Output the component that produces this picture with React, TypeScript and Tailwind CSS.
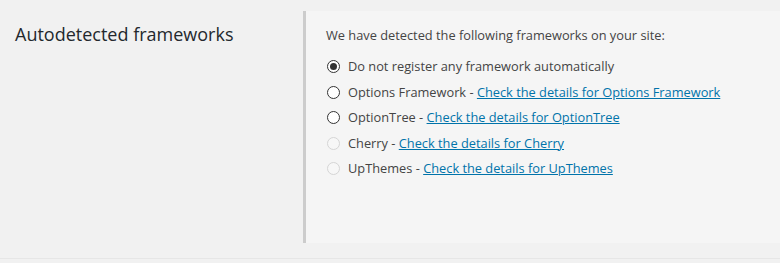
import React from 'react';

type Item = { name: string; link?: string; checked?: boolean; disabled?: boolean };

const items: Item[] = [
  { name: 'Do not register any framework automatically', checked: true },
  { name: 'Options Framework', link: 'Check the details for Options Framework' },
  { name: 'OptionTree', link: 'Check the details for OptionTree' },
  { name: 'Cherry', link: 'Check the details for Cherry', disabled: true },
  { name: 'UpThemes', link: 'Check the details for UpThemes', disabled: true },
];

const Radio = ({ checked, disabled }: { checked?: boolean; disabled?: boolean }) => (
  <span
    className={`w-[13px] h-[13px] rounded-full border flex items-center justify-center shrink-0 ${
      disabled ? 'border-[#d5d5d5] bg-[#f7f7f7]' : 'border-[#333] bg-white'
    }`}
  >
    {checked && <span className="w-[7px] h-[7px] rounded-full bg-[#333]" />}
  </span>
);

export default function App() {
  return (
    <div
      className="w-[780px] h-[263px] bg-[#f1f1f1] text-[#444] overflow-hidden"
      style={{ fontFamily: '"Open Sans", Arial, sans-serif' }}
    >
      <div className="flex pt-[11px] border-b border-[#e6e6e6] pb-[15px]">
        {/* Label column */}
        <div className="w-[303px] shrink-0 pl-[15px] pt-[9px]">
          <h2 className="text-[18px] leading-[28px] text-[#23282d]">Autodetected frameworks</h2>
        </div>

        {/* Options panel */}
        <div className="flex-1 h-[232px] bg-[#f5f5f5] border-l-[3px] border-[#ccc] pl-[20px] pt-[14px]">
          <p className="text-[12.8px] leading-[20px] mb-[9px]">
            We have detected the following frameworks on your site:
          </p>
          <div className="flex flex-col">
            {items.map((it) => (
              <label key={it.name} className="flex items-center gap-[8px] h-[25.5px] text-[12.8px] pl-[1px]">
                <Radio checked={it.checked} disabled={it.disabled} />
                <span>
                  {it.name}
                  {it.link && (
                    <>
                      {' - '}
                      <a href="#" className="text-[#0073aa] underline">
                        {it.link}
                      </a>
                    </>
                  )}
                </span>
              </label>
            ))}
          </div>
        </div>
      </div>
    </div>
  );
}
